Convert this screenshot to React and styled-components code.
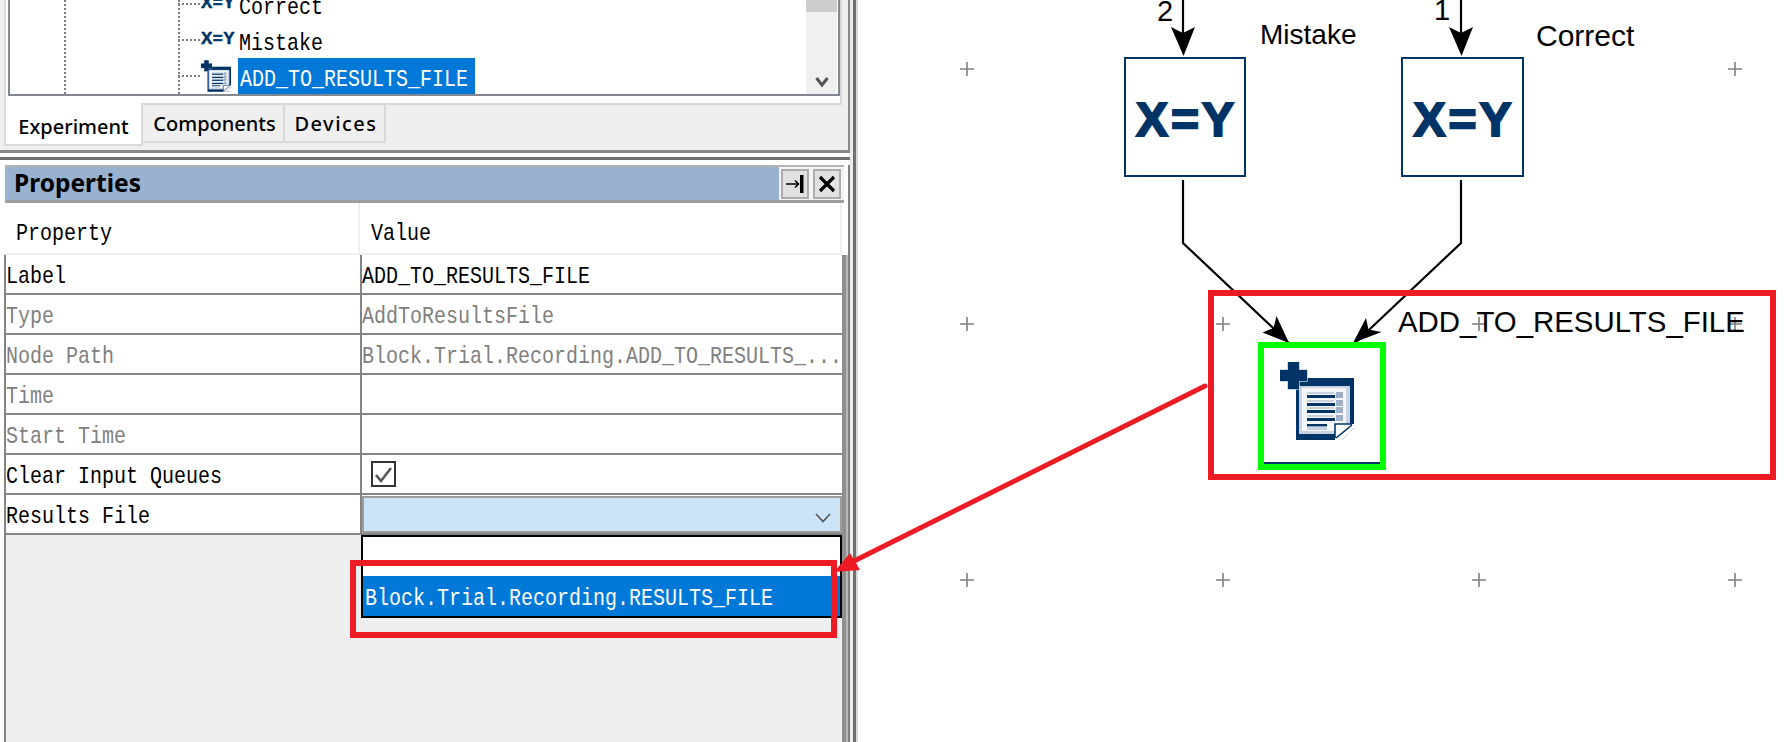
import React from "react";
import styled, { createGlobalStyle } from "styled-components";

const Global = createGlobalStyle`
  html, body { margin: 0; padding: 0; background: #fff; overflow: hidden; }
  #root { width: 1790px; height: 742px; }
`;

const NAVY = "#003366";
const RED = "#ed1c24";
const MONO = `"Liberation Mono", monospace`;
const UI = `"Noto Sans", sans-serif`;
const SANS = `"Liberation Sans", Arial, sans-serif`;

const Page = styled.div`
  position: relative;
  display: flex;
  width: 1790px;
  height: 742px;
  overflow: hidden;
  background: #fff;
`;

/* the bitmap CJK face of the original is taller than it is wide */
const Mono = styled.span`
  display: inline-block;
  font: 20px ${MONO};
  line-height: 1;
  transform: translateY(${(p) => p.$dy ?? 3}px) scaleY(1.2);
  white-space: pre;
`;

/* ---------- left dock ---------- */
const Dock = styled.div`
  width: 850px;
  height: 742px;
  flex: none;
  display: flex;
  flex-direction: column;
  background: #fff;
`;

const TopPane = styled.div`
  height: 150px;
  flex: none;
  display: flex;
  flex-direction: column;
  background: #efefef;
  border-right: 2px solid #8a8a8a;
  box-sizing: border-box;
  padding-left: 4px;
`;

const TabPage = styled.div`
  height: 105px;
  flex: none;
  width: 838px;
  box-sizing: border-box;
  background: #fff;
  border-left: 2px solid #d9d9d9;
  border-right: 2px solid #d9d9d9;
  border-bottom: 2px solid #d9d9d9;
  padding-left: 2px;
`;

const Tree = styled.div`
  height: 96px;
  box-sizing: border-box;
  border-left: 2px solid #828790;
  border-right: 2px solid #828790;
  border-bottom: 2px solid #828790;
  display: flex;
  position: relative;
  overflow: hidden;
`;

const TreeBody = styled.div`
  flex: 1;
  display: flex;
  flex-direction: column;
  justify-content: flex-end;
  padding-left: 168px;
  background-image:
    repeating-linear-gradient(to bottom, #808080 0 2px, transparent 2px 4px),
    repeating-linear-gradient(to bottom, #808080 0 2px, transparent 2px 4px);
  background-size: 2px 100%, 2px 100%;
  background-position: 54px 0, 168px 0;
  background-repeat: no-repeat;
`;

const TreeRow = styled.div`
  height: 36px;
  flex: none;
  display: flex;
  align-items: center;
`;

const Dots = styled.span`
  width: 23px;
  height: 2px;
  flex: none;
  background: repeating-linear-gradient(to right, #808080 0 2px, transparent 2px 4px);
`;

const TreeIconSlot = styled.span`
  width: 38px;
  flex: none;
  display: flex;
  align-items: center;
  justify-content: flex-start;
`;

const SmallXY = styled.span`
  font: bold 17px ${SANS};
  color: ${NAVY};
  letter-spacing: 0.5px;
  line-height: 1;
  margin-top: -4px;
  -webkit-text-stroke: 0.5px ${NAVY};
`;

const TreeLabel = styled.span`
  height: 36px;
  display: flex;
  align-items: center;
  padding: 0 7px 0 ${(p) => (p.$selected ? "2px" : "0")};
  color: ${(p) => (p.$selected ? "#fff" : "#000")};
  background: ${(p) => (p.$selected ? "#0078d7" : "transparent")};
  margin-left: ${(p) => (p.$selected ? "-1px" : "0")};
`;

const Scrollbar = styled.div`
  width: 31px;
  flex: none;
  background: #f0f0f0;
  margin-right: 1px;
  position: relative;
  display: flex;
  flex-direction: column;
  justify-content: flex-end;
  align-items: center;
`;

const Thumb = styled.div`
  position: absolute;
  left: 0;
  top: 0;
  width: 100%;
  height: 12px;
  background: #cdcdcd;
`;

const ScrollArrow = styled.svg`
  width: 14px;
  height: 12px;
  margin-bottom: 6px;
`;

const TabStrip = styled.div`
  display: flex;
  align-items: flex-start;
  height: 45px;
  flex: none;
`;

const Tab = styled.div`
  box-sizing: border-box;
  font-family: ${UI};
  font-size: 20px;
  font-weight: 500;
  color: #000;
  display: flex;
  align-items: center;
  justify-content: center;
  letter-spacing: ${(p) => p.$ls || 0}px;
  ${(p) =>
    p.$active
      ? `
    width: 139px;
    height: 43px;
    margin-top: -2px;
    padding-top: 5px;
    background: #fff;
    border-left: 2px solid #d9d9d9;
    border-right: 2px solid #d9d9d9;
    border-bottom: 2px solid #d9d9d9;
  `
      : `
    width: ${p.$w}px;
    height: 38px;
    padding-left: 3px;
    background: #efefef;
    border-right: 2px solid #d9d9d9;
    border-bottom: 2px solid #d9d9d9;
  `}
`;

const Sash = styled.div`
  height: 15px;
  flex: none;
  box-sizing: border-box;
  background: #fff;
  border-top: 3px solid #8a8a8a;
  &::after {
    content: "";
    display: block;
    margin-top: 4px;
    height: 3px;
    background: #707070;
  }
`;

const PropsPane = styled.div`
  flex: 1;
  min-height: 0;
  display: flex;
  flex-direction: column;
  padding-left: 4px;
  box-sizing: border-box;
  border-right: 2px solid #808080;
`;

const TitleBar = styled.div`
  height: 38px;
  flex: none;
  box-sizing: border-box;
  width: 839px;
  display: flex;
  align-items: center;
  justify-content: space-between;
  background: #98b2d0;
  border-top: 2px solid #b4b4b4;
  border-bottom: 3px solid #9e9e9e;
  margin-left: 1px;
`;

const TitleText = styled.span`
  font: bold 24.5px ${UI};
  color: #000;
  padding-left: 9px;
  margin-top: -2px;
`;

const TitleButtons = styled.div`
  display: flex;
  gap: 4px;
  background: #f4f4f4;
  height: 100%;
  align-items: center;
  padding: 0 3px 0 2px;
`;

const TitleButton = styled.div`
  width: 28px;
  height: 30px;
  box-sizing: border-box;
  background: #e1e1e1;
  border: 2px solid #adadad;
  display: flex;
  align-items: center;
  justify-content: center;
`;

const HeaderRow = styled.div`
  height: 52px;
  flex: none;
  width: 838px;
  display: grid;
  grid-template-columns: 356px 1fr;
  background: #fff;
  border-bottom: 2px solid #efefef;
  box-sizing: border-box;
`;

const HeaderCell = styled.div`
  color: #000;
  display: flex;
  align-items: center;
  padding-left: ${(p) => p.$pad}px;
  border-right: 2px solid #efefef;
  box-sizing: border-box;
`;

const Grid = styled.div`
  flex: 1;
  min-height: 0;
  display: flex;
  border-left: 2px solid #848484;
  border-right: 2px solid #b8b8b8;
  box-sizing: border-box;
`;

const GridBody = styled.div`
  flex: 1;
  min-width: 0;
  background: #efefef;
  display: flex;
  flex-direction: column;
`;

const GridEdge = styled.div`
  width: 4px;
  flex: none;
  background: #8f8f8f;
`;

const Row = styled.div`
  height: 40px;
  flex: none;
  display: grid;
  grid-template-columns: 354px 1fr;
  background: #fff;
  box-sizing: border-box;
  border-bottom: 2px solid #848484;
`;

const Cell = styled.div`
  color: ${(p) => (p.$muted ? "#808080" : "#000")};
  display: flex;
  align-items: center;
  white-space: nowrap;
  overflow: hidden;
  box-sizing: border-box;
`;

const ValueCell = styled(Cell)`
  border-left: 2px solid #848484;
`;

const CheckBox = styled.div`
  width: 25px;
  height: 26px;
  margin-left: 9px;
  box-sizing: border-box;
  border: 2px solid #333;
  background: #fff;
  display: flex;
  align-items: center;
  justify-content: center;
`;

const Combo = styled.div`
  flex: 1;
  align-self: stretch;
  margin: 1px 0 0 0;
  box-sizing: border-box;
  background: #cce4f7;
  border: 2px solid #9c9c9c;
  display: flex;
  align-items: flex-end;
  justify-content: flex-end;
  padding: 0 9px 8px 0;
`;

const ListRow = styled.div`
  margin-left: 355px;
  display: flex;
`;

const DropList = styled.div`
  flex: 1;
  box-sizing: border-box;
  height: 83px;
  border: 2px solid #000;
  background: #fff;
  display: flex;
  flex-direction: column;
  justify-content: flex-end;
`;

const DropItem = styled.div`
  height: 40px;
  flex: none;
  display: flex;
  align-items: center;
  padding-left: 2px;
  color: #fff;
  background: #0078d7;
  white-space: nowrap;
`;

const Splitter = styled.div`
  width: 6px;
  flex: none;
  box-sizing: border-box;
  border-right: 3px solid #707070;
  background: #ececec;
`;

/* ---------- diagram canvas: origin at x = 856 ---------- */
const Canvas = styled.div`
  position: relative;
  flex: 1;
  height: 742px;
  background: #fff;
  box-shadow: inset 2px 0 0 #d8d8d8;
`;

const Wires = styled.svg`
  position: absolute;
  left: 0;
  top: 0;
  width: 934px;
  height: 742px;
`;

const ActionNode = styled.div`
  position: absolute;
  left: ${(p) => p.$x}px;
  top: 57px;
  width: ${(p) => p.$w}px;
  height: 120px;
  box-sizing: border-box;
  border: 2.5px solid ${NAVY};
  background: #fff;
  display: flex;
  align-items: center;
  justify-content: center;
`;

const XYText = styled.span`
  font: bold 48px ${SANS};
  letter-spacing: 3px;
  color: ${NAVY};
  -webkit-text-stroke: 2px ${NAVY};
  line-height: 1;
  padding-left: 3px;
  margin-top: 6px;
`;

const NodeLabel = styled.span`
  position: absolute;
  left: ${(p) => p.$x}px;
  top: ${(p) => p.$y}px;
  font: ${(p) => p.$size || 29}px ${SANS};
  color: #000;
  line-height: 1;
  white-space: nowrap;
`;

const ResultsNode = styled.div`
  position: absolute;
  left: 408px;
  top: 348px;
  width: 116px;
  height: 116px;
  box-sizing: border-box;
  border-bottom: 2px solid ${NAVY};
  display: flex;
  align-items: flex-start;
  justify-content: flex-start;
  padding: 14px 0 0 16px;
`;

const Overlay = styled.svg`
  position: absolute;
  left: 0;
  top: 0;
  width: 1790px;
  height: 742px;
  pointer-events: none;
`;

function DocIcon({ width, height }) {
  return (
    <svg width={width} height={height} viewBox="0 0 74 78">
      <rect x="16" y="16" width="58" height="62" fill={NAVY} />
      <rect x="19" y="24" width="51" height="48" fill="#c8d2e0" />
      <rect x="22" y="26" width="44" height="43" fill="#f4f6f9" />
      {[33, 41, 48, 56].map((y) => (
        <g key={y}>
          <rect x="27" y={y - 3} width="27" height="2" fill="#c8d2e0" />
          <rect x="27" y={y} width="28" height="3" fill={NAVY} />
          <rect x="56" y={y - 3} width="7" height="6" fill="#9fb0c6" />
        </g>
      ))}
      <rect x="27" y="62" width="20" height="2.4" fill={NAVY} />
      <rect x="27" y="65" width="20" height="3" fill="#c8d2e0" />
      <path d="M55 78 L55 62 L74 62 L74 66 L62 78 Z" fill="#fff" />
      <path d="M55 76 L55 62 L72 62 M56 76 L72 63" fill="none" stroke={NAVY} strokeWidth="1.6" />
      <path d="M62 78 L74 66 L74 78 Z" fill="#fff" />
      <path d="M8 0 H19 V8 H27 V19 H19 V27 H8 V19 H0 V8 H8 Z" fill={NAVY} stroke="#c0cbd9" strokeWidth="1.5" paintOrder="stroke" />
    </svg>
  );
}

const ROWS = [
  { k: "Label", v: "ADD_TO_RESULTS_FILE" },
  { k: "Type", v: "AddToResultsFile", muted: true },
  { k: "Node Path", v: "Block.Trial.Recording.ADD_TO_RESULTS_...", muted: true },
  { k: "Time", v: "", muted: true },
  { k: "Start Time", v: "", muted: true },
];

const GRID_X = [111, 367, 623, 879];
const GRID_Y = [69, 324, 580];
const PLUSES = [];
GRID_Y.forEach((y) =>
  GRID_X.forEach((x) => {
    if (y === 69 && (x === 367 || x === 623)) return;
    PLUSES.push([x, y]);
  })
);

function ArrowHead({ d }) {
  return <path d={d} fill="#000" />;
}

export default function App() {
  return (
    <Page>
      <Global />
      <Dock>
        <TopPane>
          <TabPage>
            <Tree>
              <TreeBody>
                <TreeRow>
                  <Dots />
                  <TreeIconSlot><SmallXY>X=Y</SmallXY></TreeIconSlot>
                  <TreeLabel><Mono $dy={4}>Correct</Mono></TreeLabel>
                </TreeRow>
                <TreeRow>
                  <Dots />
                  <TreeIconSlot><SmallXY>X=Y</SmallXY></TreeIconSlot>
                  <TreeLabel><Mono $dy={4}>Mistake</Mono></TreeLabel>
                </TreeRow>
                <TreeRow>
                  <Dots />
                  <TreeIconSlot><DocIcon width={30} height={32} /></TreeIconSlot>
                  <TreeLabel $selected><Mono $dy={4}>ADD_TO_RESULTS_FILE</Mono></TreeLabel>
                </TreeRow>
              </TreeBody>
              <Scrollbar>
                <Thumb />
                <ScrollArrow viewBox="0 0 14 12">
                  <path d="M1.5 2 L7 9 L12.5 2" fill="none" stroke="#555" strokeWidth="3" />
                </ScrollArrow>
              </Scrollbar>
            </Tree>
          </TabPage>
          <TabStrip>
            <Tab $active>Experiment</Tab>
            <Tab $w={142}>Components</Tab>
            <Tab $w={101} $ls={1.5}>Devices</Tab>
          </TabStrip>
        </TopPane>
        <Sash />
        <PropsPane>
          <TitleBar>
            <TitleText>Properties</TitleText>
            <TitleButtons>
              <TitleButton>
                <svg width="20" height="20" viewBox="0 0 20 20">
                  <path d="M1 10 H13 M10 6.5 L13.5 10 L10 13.5" fill="none" stroke="#000" strokeWidth="1.6" />
                  <rect x="15" y="1" width="3.5" height="18" fill="#000" />
                </svg>
              </TitleButton>
              <TitleButton>
                <svg width="18" height="18" viewBox="0 0 18 18">
                  <path d="M2 2 L16 16 M16 2 L2 16" fill="none" stroke="#000" strokeWidth="3.2" />
                </svg>
              </TitleButton>
            </TitleButtons>
          </TitleBar>
          <HeaderRow>
            <HeaderCell $pad={12}><Mono $dy={6}>Property</Mono></HeaderCell>
            <HeaderCell $pad={11}><Mono $dy={6}>Value</Mono></HeaderCell>
          </HeaderRow>
          <Grid>
            <GridBody>
              {ROWS.map((r) => (
                <Row key={r.k}>
                  <Cell $muted={r.muted}><Mono>{r.k}</Mono></Cell>
                  <ValueCell $muted={r.muted}><Mono>{r.v}</Mono></ValueCell>
                </Row>
              ))}
              <Row>
                <Cell><Mono>Clear Input Queues</Mono></Cell>
                <ValueCell>
                  <CheckBox>
                    <svg width="19" height="19" viewBox="0 0 19 19">
                      <path d="M2 10 L7 16 L17 3" fill="none" stroke="#555" strokeWidth="2.6" />
                    </svg>
                  </CheckBox>
                </ValueCell>
              </Row>
              <Row>
                <Cell><Mono>Results File</Mono></Cell>
                <ValueCell>
                  <Combo>
                    <svg width="16" height="10" viewBox="0 0 16 10">
                      <path d="M1 1 L8 8.5 L15 1" fill="none" stroke="#555" strokeWidth="1.6" />
                    </svg>
                  </Combo>
                </ValueCell>
              </Row>
              <ListRow>
                <DropList>
                  <DropItem><Mono>Block.Trial.Recording.RESULTS_FILE</Mono></DropItem>
                </DropList>
              </ListRow>
            </GridBody>
            <GridEdge />
          </Grid>
        </PropsPane>
      </Dock>
      <Splitter />
      <Canvas>
        <Wires viewBox="0 0 934 742">
          {PLUSES.map(([x, y]) => (
            <path key={`${x}-${y}`} d={`M${x - 7} ${y} H${x + 7} M${x} ${y - 7} V${y + 7}`} stroke="#808080" strokeWidth="1.6" fill="none" />
          ))}
          <g fill="none" stroke="#000" strokeWidth="2.2">
            <path d="M327 0 V50" />
            <path d="M605 0 V50" />
            <path d="M327 180 V243 L433 343" />
            <path d="M605 180 V243 L497 345" />
          </g>
          <ArrowHead d="M327.5 56 L315 27 L327 33 L339 27 Z" />
          <ArrowHead d="M605.5 56 L593 27 L605 33 L617 27 Z" />
          <ArrowHead d="M433 343 L420.5 316 L417.5 328 L406.5 332.5 Z" />
          <ArrowHead d="M497 343 L510 318 L512.5 329.5 L525.5 332 Z" />
        </Wires>
        <NodeLabel $x={301} $y={-3}>2</NodeLabel>
        <NodeLabel $x={578} $y={-4}>1</NodeLabel>
        <NodeLabel $x={404} $y={21} $size={28}>Mistake</NodeLabel>
        <NodeLabel $x={680} $y={21} $size={30}>Correct</NodeLabel>
        <ActionNode $x={268} $w={122}><XYText>X=Y</XYText></ActionNode>
        <ActionNode $x={545} $w={123}><XYText>X=Y</XYText></ActionNode>
        <ResultsNode><DocIcon width={74} height={78} /></ResultsNode>
        <NodeLabel $x={542} $y={307} $size={29.4}>ADD_TO_RESULTS_FILE</NodeLabel>
      </Canvas>
      <Overlay viewBox="0 0 1790 742">
        <g fill="none" stroke={RED} strokeWidth="6">
          <rect x="353" y="563" width="481" height="72" />
          <rect x="1211" y="293" width="562" height="184" />
        </g>
        <path d="M1205 386 L850 563" stroke={RED} strokeWidth="5" strokeLinecap="round" fill="none" />
        <path d="M834 572 L850 553 L860 570 Z" fill={RED} />
        <rect x="1261" y="345" width="122" height="122" fill="none" stroke="#00ff00" strokeWidth="6" />
      </Overlay>
    </Page>
  );
}
